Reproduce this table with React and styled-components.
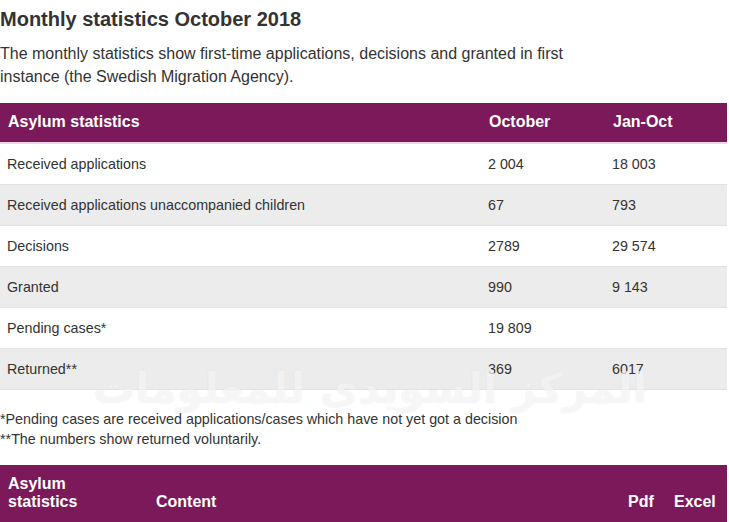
import React from "react";
import styled, { createGlobalStyle } from "styled-components";

const GlobalStyle = createGlobalStyle`
  body {
    margin: 0;
    background: #fff;
    font-family: "Liberation Sans", Arial, sans-serif;
    color: #333;
  }
`;

const rows = [
  { label: "Received applications", month: "2 004", total: "18 003" },
  { label: "Received applications unaccompanied children", month: "67", total: "793" },
  { label: "Decisions", month: "2789", total: "29 574" },
  { label: "Granted", month: "990", total: "9 143" },
  { label: "Pending cases*", month: "19 809", total: "" },
  { label: "Returned**", month: "369", total: "6017" },
];

const App = () => {
  return (
    <Page>
      <GlobalStyle />
      <Title>Monthly statistics October 2018</Title>
      <Intro>
        The monthly statistics show first-time applications, decisions and granted in first
        <br />
        instance (the Swedish Migration Agency).
      </Intro>
      <Table>
        <colgroup>
          <col style={{ width: 481 }} />
          <col style={{ width: 124 }} />
          <col />
        </colgroup>
        <thead>
          <tr>
            <HeadCell>Asylum statistics</HeadCell>
            <HeadCell>October</HeadCell>
            <HeadCell>Jan-Oct</HeadCell>
          </tr>
        </thead>
        <tbody>
          {rows.map((row, i) => (
            <Row key={row.label} $shaded={i % 2 === 1}>
              <Cell>{row.label}</Cell>
              <Cell>{row.month}</Cell>
              <Cell>{row.total}</Cell>
            </Row>
          ))}
        </tbody>
      </Table>
      <Notes>
        <p>*Pending cases are received applications/cases which have not yet got a decision</p>
        <p>**The numbers show returned voluntarily.</p>
        <Watermark>المركز السويدي للمعلومات</Watermark>
      </Notes>
      <Table>
        <colgroup>
          <col style={{ width: 148 }} />
          <col />
          <col style={{ width: 46 }} />
          <col style={{ width: 61 }} />
        </colgroup>
        <thead>
          <tr>
            <HeadCell $bottom>
              Asylum
              <br />
              statistics
            </HeadCell>
            <HeadCell $bottom>Content</HeadCell>
            <HeadCell $bottom>Pdf</HeadCell>
            <HeadCell $bottom>Excel</HeadCell>
          </tr>
        </thead>
      </Table>
    </Page>
  );
};

const Page = styled.div`
  width: 727px;
  padding-top: 6px;
`;

const Title = styled.h1`
  margin: 0 0 10px;
  font-size: 20px;
  line-height: 26px;
  font-weight: bold;
  color: #333;
`;

const Intro = styled.p`
  margin: 0 0 15px;
  font-size: 16px;
  line-height: 23px;
  color: #333;
`;

const Table = styled.table`
  width: 727px;
  table-layout: fixed;
  border-collapse: collapse;
`;

const HeadCell = styled.th`
  background: #7b195b;
  color: #fff;
  text-align: left;
  font-size: 16px;
  font-weight: bold;
  line-height: 18px;
  padding: 10px 8px 11px;
  vertical-align: ${(p) => (p.$bottom ? "bottom" : "middle")};
  border-bottom: 2px solid #efd3e6;
`;

const Row = styled.tr`
  background: ${(p) => (p.$shaded ? "#ececec" : "#fff")};
  border-bottom: 1px solid #e2e2e2;
`;

const Cell = styled.td`
  height: 40px;
  padding: 0 7px;
  font-size: 14.3px;
  color: #333;
  vertical-align: middle;
`;

const Notes = styled.div`
  position: relative;
  padding: 19px 0 16px;
  font-size: 14.3px;
  line-height: 20px;
  color: #333;
  p {
    margin: 0;
  }
`;

const Watermark = styled.div`
  position: absolute;
  left: 90px;
  top: -28px;
  width: 560px;
  white-space: nowrap;
  text-align: center;
  font-family: "DejaVu Sans", sans-serif;
  font-size: 42px;
  line-height: 54px;
  font-weight: bold;
  color: rgba(255, 255, 255, 0.7);
  text-shadow: 0 0 1px rgba(0, 0, 0, 0.1);
  pointer-events: none;
`;

export default App;
